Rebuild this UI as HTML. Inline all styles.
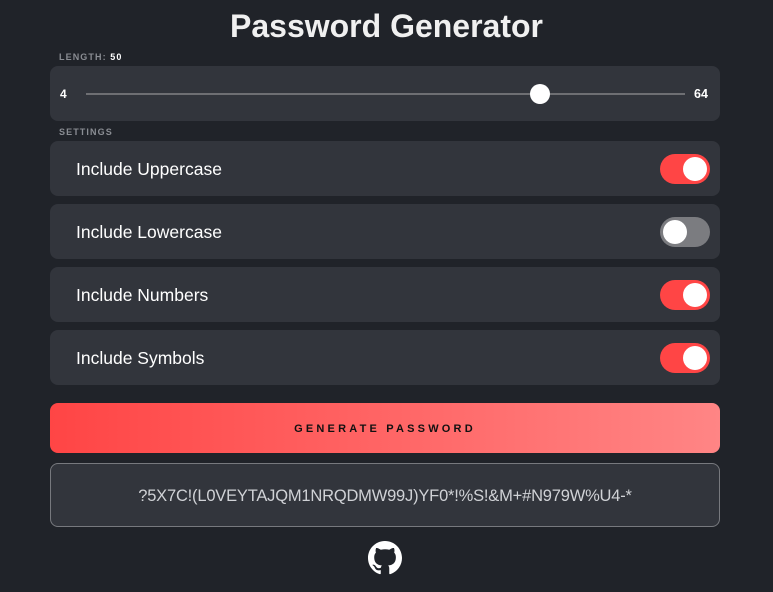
<!DOCTYPE html>
<html><head><meta charset="utf-8"><style>
*{box-sizing:border-box;margin:0;padding:0}
body{width:773px;height:592px;background:#202329;font-family:"Liberation Sans",sans-serif;color:#fff;position:relative;overflow:hidden}
h1{position:absolute;top:8px;left:0;width:773px;text-align:center;font-size:32px;font-weight:bold;color:#f0f0f0}
.lbl{position:absolute;left:59px;font-size:9px;font-weight:bold;color:#8a8d93;letter-spacing:1.1px}
.card{position:absolute;left:50px;width:670px;height:55px;background:#32353c;border-radius:8px}
.row span{position:absolute;left:26px;top:18px;font-size:17.5px;color:#fff}
.tg{position:absolute;left:610px;top:13px;width:50px;height:30px;border-radius:15px;background:#ff4545}
.tg::after{content:"";position:absolute;top:3px;left:23px;width:24px;height:24px;border-radius:50%;background:#fff}
.tg.off{background:#7b7c80}.tg.off::after{left:3px}
.btn{position:absolute;left:50px;top:403px;width:670px;height:50px;border-radius:8px;background:linear-gradient(90deg,#ff4545,#ff8585);text-align:center;line-height:52px;font-size:11px;font-weight:bold;letter-spacing:3.2px;color:#111}
.out{position:absolute;left:50px;top:463px;width:670px;height:64px;border-radius:8px;border:1px solid #77797e;background:#32353c;text-align:center;line-height:64px;font-size:16.5px;color:#d0d2d6;letter-spacing:-0.2px}
</style></head><body>
<h1>Password Generator</h1>
<div class="lbl" style="top:52px">LENGTH: <span style="color:#fff">50</span></div>
<div class="card" style="top:66px">
<span style="position:absolute;left:10px;top:21px;font-size:12px;font-weight:bold">4</span>
<div style="position:absolute;left:36px;top:27px;width:599px;height:2px;background:#6e6f73"></div>
<div style="position:absolute;left:480px;top:18px;width:20px;height:20px;border-radius:50%;background:#fff"></div>
<span style="position:absolute;left:644px;top:21px;font-size:12.5px;font-weight:bold">64</span>
</div>
<div class="lbl" style="top:127px">SETTINGS</div>
<div class="card row" style="top:141px"><span>Include Uppercase</span><div class="tg"></div></div>
<div class="card row" style="top:204px"><span>Include Lowercase</span><div class="tg off"></div></div>
<div class="card row" style="top:267px"><span>Include Numbers</span><div class="tg"></div></div>
<div class="card row" style="top:330px"><span>Include Symbols</span><div class="tg"></div></div>
<div class="btn">GENERATE PASSWORD</div>
<div class="out">?5X7C!(L0VEYTAJQM1NRQDMW99J)YF0*!%S!&amp;M+#N979W%U4-*</div>
<svg style="position:absolute;left:368px;top:541px" width="34" height="34" viewBox="0 0 16 16"><path fill="#fff" d="M8 0C3.58 0 0 3.58 0 8c0 3.54 2.290 6.53 5.47 7.590.4.07.55-.17.55-.38 0-.19-.01-.82-.01-1.49-2.01.37-2.53-.49-2.69-.94-.09-.23-.48-.94-.82-1.13-.28-.15-.68-.52-.01-.53.63-.01 1.080.58 1.23.82.72 1.21 1.87.87 2.33.66.07-.52.28-.87.51-1.07-1.78-.2-3.64-.89-3.64-3.95 0-.87.31-1.59.82-2.15-.08-.2-.36-1.02.08-2.12 0 0 .67-.21 2.2.82.64-.18 1.32-.27 2-.27.68 0 1.36.09 2 .27 1.53-1.04 2.2-.82 2.2-.82.44 1.1.16 1.92.08 2.12.51.56.82 1.27.82 2.15 0 3.07-1.87 3.75-3.65 3.95.29.25.54.73.54 1.48 0 1.07-.01 1.93-.01 2.2 0 .21.15.46.55.38A8.013 8.013 0 0 0 16 8c0-4.42-3.58-8-8-8z"/></svg>
</body></html>
